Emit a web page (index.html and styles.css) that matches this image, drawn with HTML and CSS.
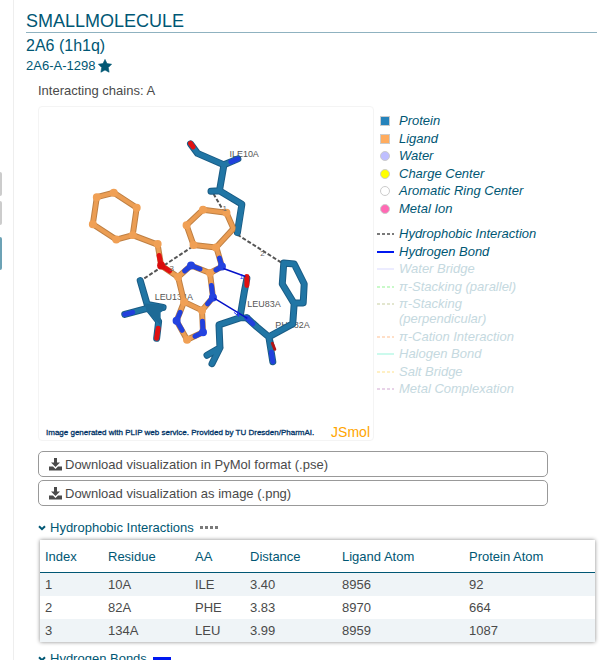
FILE: index.html
```html
<!DOCTYPE html>
<html lang="en">
<head>
<meta charset="utf-8">
<title>2A6 (1h1q) – Small molecule interactions</title>
<link rel="stylesheet" href="styles.css">
</head>
<body>
<div class="layout">
  <aside class="rail" aria-hidden="true">
    <span class="rail-box"></span>
    <span class="rail-box"></span>
    <span class="rail-box rail-box-active"></span>
  </aside>
  <main class="main">
    <h1>SMALLMOLECULE</h1>
    <h2>2A6 (1h1q)</h2>
    <h3>2A6-A-1298
      <svg class="star" viewBox="0 0 14 14"><path d="M7 .4l2 4.2 4.6.6-3.3 3.3.8 4.7L7 11l-4.1 2.2.8-4.7L.4 5.2 5 4.6z" fill="#005774" stroke="#005774" stroke-width=".6" stroke-linejoin="round"/></svg>
    </h3>
    <div class="details">
      <p class="chains">Interacting chains: A</p>
      <div class="view">
        <figure class="viewer">
          <svg class="molecule" viewBox="38 106 335 318" role="img" aria-label="Binding site">
            <g class="atom-label">
              <text x="229" y="156">ILE10A</text>
              <text x="154" y="300">LEU134A</text>
              <text x="247" y="307">LEU83A</text>
              <text x="275" y="328">PHE82A</text>
            </g>
            <g class="contact">
              <path d="M213 193l11 19M237 234l44 28M192 246l-50 33"/>
            </g>
            <g class="bond protein-edge">
              <path d="M190 143l7 9.500 26.500 11.500L219 190l22.500 13.500L237 232M223.500 164l14-6M219 190l-8.500.500"/>
              <path d="M283.500 262.500l10.500 1 10 20-1 19h-9.500l-11.500-19zM294 302.500l-1.500 21-24 13-12-10-10-9M268.500 336.500l4 25M268.500 336.500l2.500 10"/>
              <path d="M246.500 278L244 291l-4.500 26.500-21 7 1 23-13 7.500M219.500 347.500l-8 16M239.500 317.500h7"/>
              <path d="M139.500 280l7 24 16 3M146.500 308L124 314M147 307l11 14-2 17"/>
            </g>
            <g class="bond protein">
              <path d="M190 143l7 9.500 26.500 11.500L219 190l22.500 13.500L237 232M223.500 164l14-6M219 190l-8.500.500"/>
              <path d="M283.500 262.500l10.500 1 10 20-1 19h-9.500l-11.500-19zM294 302.500l-1.500 21-24 13-12-10-10-9M268.500 336.500l4 25"/>
              <path d="M246.500 278L244 291l-4.500 26.500-21 7 1 23-13 7.500M219.500 347.500l-8 16M239.500 317.500h7"/>
              <path d="M139.500 280l7 24 16 3M146.500 308L124 314M147 307l11 14-2 17"/>
            </g>
            <path class="wedge" d="M144 303l19 1v6l-3 2v13l-14-14z"/>
            <g class="bond oxygen"><path d="M190 142.500l2.500 3.500M246.500 276v9M157.500 328l-1.500 10"/></g>
            <path d="M272 343l2.500 6" stroke="#b51414" stroke-width="3" stroke-linecap="round"/>
            <g class="bond nitrogen"><path d="M230.500 161l7-3M132 312l-8 2M246.500 317.500l6 6M271 352l1.500 9.500"/></g>
            <g class="bond ligand-edge">
              <path d="M96 196.500l17-4.500 23 15-4 27.500-16.500 4.500L92 223.500zM132 234.500l25 9.500 3.500 21 17 11.500"/>
              <path d="M193 244.500l22.500 2.500L233 228l-7-16-23.500-3-16.500 15.500zM216 247l5.500 19-12 6.500"/>
              <path d="M177.500 276.500l13-11.500 19 7.500 3 24.500-11 13-18-8.500zM183.500 301.500l-7.500 19 10.500 19 16-7.500-1-22"/>
            </g>
            <g class="bond ligand">
              <path d="M96 196.500l17-4.500 23 15-4 27.500-16.500 4.500L92 223.500zM132 234.500l25 9.500 3.500 21 17 11.500"/>
              <path d="M193 244.500l22.500 2.500L233 228l-7-16-23.500-3-16.500 15.500zM216 247l5.500 19-12 6.500"/>
              <path d="M177.500 276.500l13-11.500 19 7.500 3 24.500-11 13-18-8.500zM183.500 301.500l-7.500 19 10.500 19 16-7.500-1-22"/>
            </g>
            <g class="joint">
              <path d="M96 196.500h0M113 192h0M136 207h0M132 234.500h0M115.500 239h0M92 223.500h0M157 243.500h0M193 244.500h0M215.500 247h0M226 212h0M202.500 209h0M186 224.500h0M177.500 276.500h0M209.500 272.500h0M201.500 310h0M183.500 301.500h0M186.500 339.500h0"/>
            </g>
            <g class="bond oxygen"><path d="M158.500 255l2 10 8.500 5.500"/></g>
            <path class="joint-oxygen" d="M160.500 265h0"/>
            <g class="bond nitrogen">
              <path d="M184 270.500l6.500-5.500 9 3.500M219 257.500l2.500 8.500-6 3.500M211 285l1.500 12-5.500 6.500M179.500 312l-3.500 8.500 5.500 9.500M202 321l.5 11-8 4"/>
            </g>
            <path class="joint-nitrogen" d="M190.500 265h0M221.500 266h0M212.500 297h0M176 320.500h0M202.500 332h0"/>
            <path class="bond protein" d="M241.300 205L237 232"/>
            <path d="M223 268l22 8M214 298l33 20" stroke="#0612c8" stroke-width="1.500"/>
            <path d="M233.500 312l5 4-1-5" stroke="#2430ff" fill="none"/>
            <g class="contact-label">
              <text x="222" y="210">1</text>
              <text x="260" y="255">2</text>
              <text x="169" y="270">3</text>
            </g>
            <text class="hydrogen-label" x="239" y="279">1</text>
          </svg>
          <figcaption>
            <span class="credit">Image generated with PLIP web service. Provided by TU Dresden/PharmAI.</span>
            <a class="jsmol" href="#">JSmol</a>
          </figcaption>
        </figure>
        <div class="legend">
          <ul class="keys keys-atoms">
            <li><i class="swatch protein-key"></i>Protein</li>
            <li><i class="swatch ligand-key"></i>Ligand</li>
            <li><i class="swatch round water-key"></i>Water</li>
            <li><i class="swatch round charge-key"></i>Charge Center</li>
            <li><i class="swatch round"></i>Aromatic Ring Center</li>
            <li><i class="swatch round metal-key"></i>Metal Ion</li>
          </ul>
          <ul class="keys keys-bonds">
            <li><i class="line dotted"></i>Hydrophobic Interaction</li>
            <li><i class="line solid hydrogen"></i>Hydrogen Bond</li>
            <li class="off"><i class="line solid water"></i>Water Bridge</li>
            <li class="off"><i class="line dotted parallel"></i>π-Stacking (parallel)</li>
            <li class="off"><i class="line dotted perpendicular"></i>π-Stacking<br>(perpendicular)</li>
            <li class="off"><i class="line dotted cation"></i>π-Cation Interaction</li>
            <li class="off"><i class="line solid halogen"></i>Halogen Bond</li>
            <li class="off"><i class="line dotted salt"></i>Salt Bridge</li>
            <li class="off"><i class="line dotted complexation"></i>Metal Complexation</li>
          </ul>
        </div>
      </div>
      <div class="downloads">
        <button type="button"><svg class="download" viewBox="0 0 13 13"><path d="M5 0h3v4.500h3L6.500 9 2 4.500h3z"/><path d="M0 8.500h4L6.500 11 9 8.500h4V12.500H0z"/></svg>Download visualization in PyMol format (.pse)</button>
        <button type="button"><svg class="download" viewBox="0 0 13 13"><path d="M5 0h3v4.500h3L6.500 9 2 4.500h3z"/><path d="M0 8.500h4L6.500 11 9 8.500h4V12.500H0z"/></svg>Download visualization as image (.png)</button>
      </div>
      <h4><svg class="chevron" viewBox="0 0 8 6"><path d="M1 1.200l3 3 3-3"/></svg>Hydrophobic Interactions<i class="line dotted"></i></h4>
      <table>
        <colgroup><col class="c-index"><col class="c-residue"><col class="c-aa"><col class="c-distance"><col class="c-ligand"><col></colgroup>
        <thead><tr><th>Index</th><th>Residue</th><th>AA</th><th>Distance</th><th>Ligand Atom</th><th>Protein Atom</th></tr></thead>
        <tbody>
          <tr><td>1</td><td>10A</td><td>ILE</td><td>3.40</td><td>8956</td><td>92</td></tr>
          <tr><td>2</td><td>82A</td><td>PHE</td><td>3.83</td><td>8970</td><td>664</td></tr>
          <tr><td>3</td><td>134A</td><td>LEU</td><td>3.99</td><td>8959</td><td>1087</td></tr>
        </tbody>
      </table>
      <h4><svg class="chevron" viewBox="0 0 8 6"><path d="M1 1.200l3 3 3-3"/></svg>Hydrogen Bonds<i class="line solid hydrogen"></i></h4>
    </div>
  </main>
</div>
</body>
</html>
```
FILE: styles.css
```css
* { box-sizing: border-box; }
body {
  margin: 0;
  height: 100vh;
  overflow: hidden;
  background: #fff;
  color: #4a4a4a;
  font: 13px/15px "Liberation Sans", Arial, sans-serif;
}
h1, h2, h3, h4, p, ul, figure { margin: 0; padding: 0; font-weight: 400; }
.layout { display: flex; min-height: 100vh; }
.rail {
  flex: 0 0 14px;
  padding-top: 172px;
  border-right: 1px solid #eee;
  display: flex;
  flex-direction: column;
  align-items: flex-start;
  gap: 5px;
}
.rail-box {
  width: 2px;
  height: 24px;
  background: #ccc;
  border-radius: 0 2px 2px 0;
}
.rail-box-active { height: 33px; margin-top: 7px; background: #6ca2b5; }
.main { flex: 1; min-width: 0; padding: 10px 15px 0 12px; }
h1, h2, h3, h4 { color: #005774; }
h1 {
  font-size: 18px;
  line-height: 22px;
  border-bottom: 1px solid #8fb2c0;
}
h2 { margin-top: 3px; font-size: 16px; line-height: 20px; }
h3 {
  display: flex;
  align-items: center;
  gap: 3px;
  margin-top: 2px;
  font-size: 13px;
  line-height: 15px;
}
.star { width: 14px; height: 14px; }
.details { padding-left: 12px; }
.chains { margin-top: 10px; }
.view { display: flex; margin-top: 8px; }
.viewer {
  flex: 0 1 336px;
  border: 1px solid #f4f4f4;
  border-radius: 4px;
}
.molecule { display: block; width: 100%; }
.bond { fill: none; stroke-linecap: round; stroke-linejoin: round; stroke-width: 5; }
.protein { stroke: #2176a5; }
.protein-edge { stroke: #1a5c85; stroke-width: 7; }
.ligand { stroke: #eb9d53; stroke-width: 4; }
.ligand-edge { stroke: #bf8044; stroke-width: 6; }
.oxygen { stroke: #e01010; }
.nitrogen { stroke: #2140dc; }
.wedge { fill: #1d6a96; }
.joint, .joint-oxygen, .joint-nitrogen { stroke-width: 8; stroke-linecap: round; }
.joint { stroke: #f0a055; }
.joint-oxygen { stroke: #d80c0c; }
.joint-nitrogen { stroke: #2443e0; }
.contact { fill: none; stroke: #555; stroke-width: 2; stroke-dasharray: 4 2; }
.atom-label { font-size: 9px; fill: #555; }
.contact-label { font-size: 8px; fill: #666; }
.hydrogen-label { font-size: 7px; fill: #1a28ff; }
figcaption {
  display: flex;
  justify-content: space-between;
  align-items: center;
  height: 16px;
  padding: 0 3px 0 7px;
}
.credit { font-size: 8px; color: #003366; white-space: nowrap; -webkit-text-stroke: 0.3px #003366; }
.jsmol { font-size: 14px; color: #ffa500; text-decoration: none; }
.legend { padding: 7px 0 0 3px; color: #005774; font-style: italic; white-space: nowrap; }
.keys {
  display: flex;
  flex-direction: column;
  justify-content: space-between;
  list-style: none;
}
.keys-atoms { min-height: 103px; }
.keys-bonds { min-height: 170px; margin-top: 10px; }
.keys li { display: flex; }
.swatch {
  flex: none;
  width: 10px;
  height: 10px;
  margin: 3px 9px 0 3px;
  border: 1px solid #ccc;
}
.round { border-radius: 50%; }
.protein-key { background: #2683bb; }
.ligand-key { background: #ffac5f; }
.water-key { background: #bfbfff; }
.charge-key { background: #ff0; }
.metal-key { background: #ff69b4; }
.line { flex: none; width: 18px; height: 2px; color: #7a7a7a; }
.keys .line { margin: 7px 5px 0 0; width: 17px; }
.dotted { background: repeating-linear-gradient(90deg, currentColor 0 3px, transparent 3px 5px); }
.solid { background: currentColor; }
.off { color: #c5d9e0; }
.hydrogen { color: #0018f0; }
.water { color: #ececff; }
.parallel { color: #c9f9c9; }
.perpendicular { color: #e3e6cf; }
.cation { color: #ffdfc8; }
.halogen { color: #ccfaed; }
.salt { color: #fff0c4; }
.complexation { color: #e8d3e8; }
.downloads { display: grid; gap: 3px; max-width: 510px; margin: 10px 0 14px; }
button {
  display: flex;
  align-items: center;
  gap: 3px;
  height: 26px;
  padding: 0 10px;
  border: 1px solid #999;
  border-radius: 5px;
  background: #fff;
  color: #4a4a4a;
  font: inherit;
  text-align: left;
}
.download { width: 13px; height: 13px; fill: #4a4a4a; }
h4 { display: flex; align-items: center; line-height: 15px; }
h4 .line { height: 3px; margin-left: 6px; }
.chevron { width: 8px; height: 6px; margin-right: 4px; fill: none; stroke: #005774; stroke-width: 2; }
table {
  width: calc(100% - 4px);
  margin: 5px 2px 9px;
  table-layout: fixed;
  border-collapse: collapse;
  box-shadow: 0 0 4px #888;
}
.c-index { width: 63px; }
.c-residue { width: 87px; }
.c-aa { width: 55px; }
.c-distance { width: 92px; }
.c-ligand { width: 127px; }
th, td { padding: 4px 5px; text-align: left; font-weight: 400; }
th { padding: 9px 5px 8px; color: #005774; border-bottom: 1px solid #005774; }
tbody tr:nth-child(odd) { background: #eff4f7; }
```
